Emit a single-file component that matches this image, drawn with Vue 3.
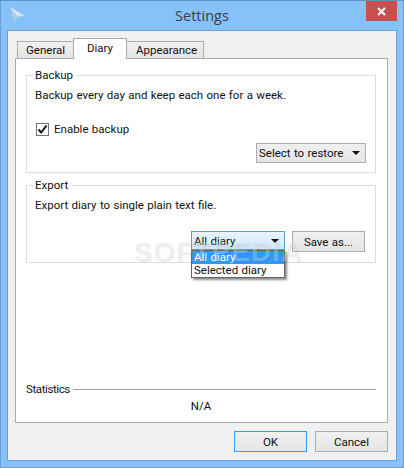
<script setup>
const tabs = [
  { name: 'General', active: false },
  { name: 'Diary', active: true },
  { name: 'Appearance', active: false },
];
const exportOptions = ['All diary', 'Selected diary'];
</script>

<template>
  <div class="window">
    <div class="titlebar">
      <svg class="app-icon" width="16" height="16" viewBox="0 0 16 16">
        <path d="M0 0 L15 9 L8 10.5 L4 15 Z" fill="#a9cbe8" />
        <path d="M0 0 L15 9 L6.5 8.5 Z" fill="#d3e6f7" />
      </svg>
      <span class="title">Settings</span>
      <div class="close">
        <svg width="9" height="9" viewBox="0 0 9 9">
          <path d="M1 1 L8 8 M8 1 L1 8" stroke="#fff" stroke-width="2" />
        </svg>
      </div>
    </div>

    <div class="client">
      <div class="tabs">
        <div v-for="t in tabs" :key="t.name" class="tab" :class="{ active: t.active }">{{ t.name }}</div>
      </div>

      <div class="pane">
        <fieldset class="group backup">
          <legend>Backup</legend>
          <p class="desc">Backup every day and keep each one for a week.</p>
          <label class="check">
            <span class="box">
              <svg width="11" height="11" viewBox="0 0 11 11">
                <path d="M1.5 5.5 L4.2 8.5 L9.5 1.5" fill="none" stroke="#111" stroke-width="2" />
              </svg>
            </span>
            Enable backup
          </label>
          <div class="row restore-row">
            <div class="btn combo restore">
              <span>Select to restore</span>
              <i class="arrow"></i>
            </div>
          </div>
        </fieldset>

        <fieldset class="group export">
          <legend>Export</legend>
          <p class="desc">Export diary to single plain text file.</p>
          <div class="row export-row">
            <div class="select-wrap">
              <div class="btn combo open">
                <span>All diary</span>
                <i class="arrow"></i>
              </div>
              <ul class="options">
                <li v-for="(o, i) in exportOptions" :key="o" :class="{ hover: i === 0 }">{{ o }}</li>
              </ul>
            </div>
            <div class="btn save">Save as...</div>
          </div>
        </fieldset>

        <div class="spacer"></div>

        <div class="stats-head">
          <span class="stats-label">Statistics</span>
          <div class="rule"></div>
        </div>
        <div class="stats-value">N/A</div>
      </div>

      <div class="footer">
        <div class="btn action default">OK</div>
        <div class="btn action">Cancel</div>
      </div>
    </div>

    <div class="watermark">SOFTPEDIA</div>
  </div>
</template>

<style>
html, body {
  margin: 0;
  padding: 0;
  background: #85c0f8;
}
</style>

<style scoped>
.window {
  position: relative;
  box-sizing: border-box;
  width: 404px;
  height: 468px;
  display: flex;
  flex-direction: column;
  background: #86c1f9;
  border: 1px solid #6a9fd2;
  border-top-color: #5f93c6;
  padding: 0 6px 6px;
  font-family: Roboto, "Open Sans", sans-serif;
  font-size: 11.5px;
  word-spacing: 0.5px;
  color: #111;
  overflow: hidden;
}

.titlebar {
  position: relative;
  height: 29px;
  flex: none;
  display: flex;
  align-items: center;
  justify-content: center;
}

.app-icon {
  position: absolute;
  left: 3px;
  top: 6px;
}

.title {
  font-family: "Open Sans", sans-serif;
  font-size: 14.5px;
  color: #3a3f47;
}

.close {
  position: absolute;
  right: 0;
  top: 0;
  width: 31px;
  height: 20px;
  background: #c75050;
  display: flex;
  align-items: center;
  justify-content: center;
}

.client {
  flex: 1;
  min-height: 0;
  display: flex;
  flex-direction: column;
  background: #f0f0f0;
  border: 1px solid #6a9fd2;
  padding: 7px 8px 8px 7px;
}

.tabs {
  display: flex;
  align-items: flex-end;
  height: 20px;
  padding-left: 2px;
  position: relative;
  z-index: 1;
  flex: none;
}

.tab {
  box-sizing: border-box;
  height: 17px;
  line-height: 17px;
  padding: 0 8px;
  background: linear-gradient(#f0f0f0, #e5e5e5);
  border: 1px solid #acacac;
  border-bottom: none;
}

.tab:first-child {
  width: 57px;
}

.tab:nth-child(3) {
  width: 78px;
  margin-left: -1px;
  padding-left: 9px;
}

.tab.active {
  height: 21px;
  width: 54px;
  line-height: 19px;
  text-align: center;
  background: #fff;
  margin-bottom: -1px;
  margin-left: -1px;
  position: relative;
  z-index: 2;
  padding: 0;
}

.pane {
  flex: 1;
  min-height: 0;
  display: flex;
  flex-direction: column;
  box-sizing: border-box;
  background: #fff;
  border: 1px solid #acacac;
  padding: 8px 11px 8px 10px;
}

.group {
  margin: 0;
  padding: 0;
  min-width: 0;
  border: 1px solid #dcdcdc;
  display: block;
}

.group legend {
  padding: 0 3px 0 2px;
  margin-left: 6px;
  line-height: 16px;
}

.backup {
  box-sizing: border-box;
  height: 106px;
  margin-bottom: 4px;
}

.export {
  box-sizing: border-box;
  height: 86px;
}

.desc {
  margin: 0;
  padding: 4px 0 0 8px;
  line-height: 16px;
}

.check {
  display: flex;
  align-items: center;
  gap: 5px;
  margin: 18px 0 0 9px;
  line-height: 16px;
}

.box {
  box-sizing: border-box;
  width: 13px;
  height: 13px;
  border: 1px solid #707070;
  background: #fff;
  display: flex;
  align-items: center;
  justify-content: center;
}

.row {
  display: flex;
  justify-content: flex-end;
}

.restore-row {
  margin-top: 6px;
  padding-right: 9px;
}

.export-row {
  margin-top: 18px;
  padding-right: 10px;
  gap: 7px;
}

.btn {
  box-sizing: border-box;
  border: 1px solid #acacac;
  background: linear-gradient(#f0f0f0, #e5e5e5);
  display: flex;
  align-items: center;
  justify-content: center;
}

.combo {
  justify-content: space-between;
  padding: 0 5px 0 2px;
}

.restore {
  width: 110px;
  height: 20px;
}

.arrow {
  width: 0;
  height: 0;
  border-left: 4px solid transparent;
  border-right: 4px solid transparent;
  border-top: 4px solid #111;
}

.select-wrap {
  position: relative;
  width: 94px;
  height: 19px;
}

.open {
  height: 19px;
  border-color: #569de5;
  background: linear-gradient(#ebf4fc, #cfe6fc);
}

.options {
  position: absolute;
  left: 0;
  right: 0;
  top: 19px;
  margin: 0;
  padding: 0;
  list-style: none;
  background: #fff;
  border: 1px solid #646464;
  box-shadow: 2px 2px 2px rgba(0, 0, 0, 0.45);
  z-index: 3;
}

.options li {
  height: 13px;
  line-height: 13px;
  padding-left: 2px;
}

.options li.hover {
  background: #3399ff;
  color: #fff;
  outline: 1px dotted #b8792d;
  outline-offset: -1px;
}

.save {
  width: 73px;
  height: 21px;
}

.spacer {
  flex: 1;
}

.stats-head {
  display: flex;
  align-items: center;
  gap: 3px;
  line-height: 16px;
}

.stats-label {
  letter-spacing: -0.4px;
}

.rule {
  flex: 1;
  height: 1px;
  background: #a0a0a0;
}

.stats-value {
  text-align: center;
  line-height: 16px;
  margin-top: 1px;
}

.footer {
  display: flex;
  justify-content: flex-end;
  gap: 8px;
  padding-top: 8px;
  flex: none;
}

.action {
  width: 73px;
  height: 21px;
}

.default {
  border-color: #3399ff;
}

.watermark {
  position: absolute;
  left: 132px;
  top: 235px;
  font-family: "Liberation Sans", sans-serif;
  font-size: 28px;
  font-weight: 700;
  letter-spacing: 1px;
  color: rgba(255, 255, 255, 0.28);
  text-shadow: 1px 1px 2px rgba(0, 0, 0, 0.1);
  pointer-events: none;
  z-index: 4;
}
</style>
